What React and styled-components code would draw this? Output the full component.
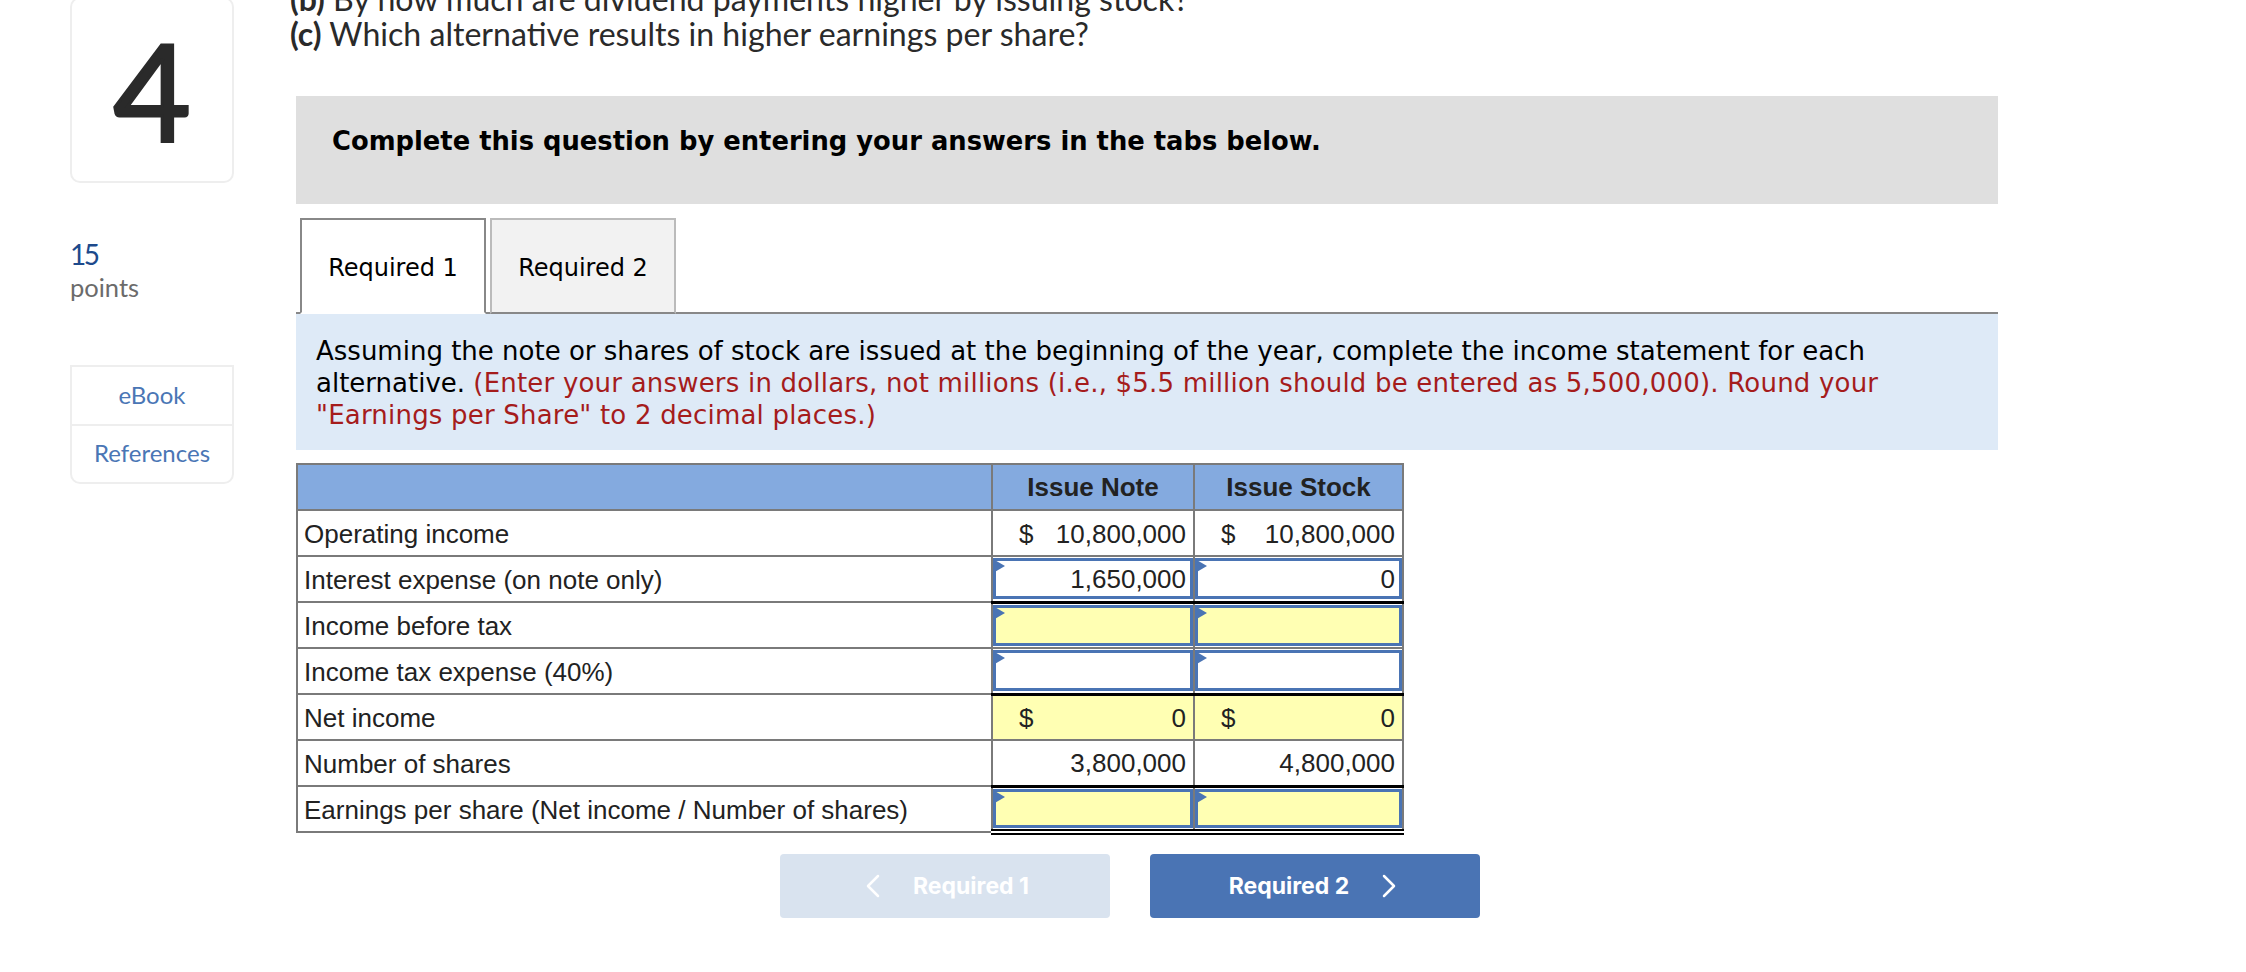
import React from "react";
import styled, { createGlobalStyle } from "styled-components";
import { ChevronLeft, ChevronRight } from "lucide-react";

const GlobalStyle = createGlobalStyle`
  html, body {
    margin: 0;
    padding: 0;
    background: #fff;
    overflow: hidden;
  }
`;

const rows = [
  { label: "Operating income", note: "10,800,000", stock: "10,800,000", dollar: true },
  { label: "Interest expense (on note only)", note: "1,650,000", stock: "0", input: true },
  { label: "Income before tax", input: true, yellow: true, rule: true },
  { label: "Income tax expense (40%)", input: true },
  { label: "Net income", note: "0", stock: "0", dollar: true, yellow: true, rule: true },
  { label: "Number of shares", note: "3,800,000", stock: "4,800,000" },
  { label: "Earnings per share (Net income / Number of shares)", input: true, yellow: true, rule: true, total: true },
];

const ValueCell = ({ value, row }) => (
  <Cell $yellow={row.yellow && !row.input} $rule={row.rule} $total={row.total}>
    {row.input ? (
      <Field $yellow={row.yellow} $total={row.total}>{value}</Field>
    ) : (
      <Amount>
        {row.dollar && <Dollar>$</Dollar>}
        <span>{value}</span>
      </Amount>
    )}
  </Cell>
);

const App = () => {
  return (
    <Page>
      <GlobalStyle />
      <Sidebar>
        <NumberCard>4</NumberCard>
        <Points>
          <PointsValue>15</PointsValue>
          <PointsLabel>points</PointsLabel>
        </Points>
        <LinkBox>
          <SideLink>eBook</SideLink>
          <SideLink>References</SideLink>
        </LinkBox>
      </Sidebar>
      <Main>
        <Question>
          <QuestionLine><b>(b)</b> By how much are dividend payments higher by issuing stock?</QuestionLine>
          <QuestionLine><b>(c)</b> Which alternative results in higher earnings per share?</QuestionLine>
        </Question>
        <Content>
          <Banner>Complete this question by entering your answers in the tabs below.</Banner>
          <Tabs>
            <Tab $active>Required 1</Tab>
            <Tab>Required 2</Tab>
          </Tabs>
          <Instructions>
            Assuming the note or shares of stock are issued at the beginning of the year, complete the income statement for each
            <br />
            alternative. <Red>(Enter your answers in dollars, not millions (i.e., $5.5 million should be entered as 5,500,000). Round your
            <br />
            "Earnings per Share" to 2 decimal places.)</Red>
          </Instructions>
          <Sheet>
            <colgroup>
              <col style={{ width: 695 }} />
              <col style={{ width: 202 }} />
              <col style={{ width: 209 }} />
            </colgroup>
            <thead>
              <tr>
                <HeadCell />
                <HeadCell>Issue Note</HeadCell>
                <HeadCell>Issue Stock</HeadCell>
              </tr>
            </thead>
            <tbody>
              {rows.map((row) => (
                <tr key={row.label}>
                  <LabelCell>{row.label}</LabelCell>
                  <ValueCell value={row.note} row={row} />
                  <ValueCell value={row.stock} row={row} />
                </tr>
              ))}
            </tbody>
          </Sheet>
          <Pager>
            <PagerButton $disabled>
              <ChevronLeft size={40} strokeWidth={1.5} />
              <span>Required 1</span>
            </PagerButton>
            <PagerButton>
              <span>Required 2</span>
              <ChevronRight size={40} strokeWidth={1.5} />
            </PagerButton>
          </Pager>
        </Content>
      </Main>
    </Page>
  );
};

export default App;

const Page = styled.div`
  display: flex;
  gap: 55px;
  width: 2246px;
  height: 975px;
  margin-top: -3px;
  padding-left: 70px;
  box-sizing: border-box;
  font-family: Lato, "Liberation Sans", sans-serif;
  color: #222;
`;

const Sidebar = styled.aside`
  width: 164px;
  flex: none;
  display: flex;
  flex-direction: column;
`;

const NumberCard = styled.div`
  height: 186px;
  box-sizing: border-box;
  border: 2px solid #eee;
  border-radius: 10px;
  display: flex;
  align-items: center;
  justify-content: center;
  font-size: 134px;
  line-height: 1;
  color: #2a2a2a;
  -webkit-text-stroke: 3px #2a2a2a;
`;

const Points = styled.div`
  margin-top: 54px;
  display: flex;
  flex-direction: column;
`;

const PointsValue = styled.div`
  font-size: 28px;
  line-height: 34px;
  letter-spacing: -2.5px;
  color: #1d4a8c;
`;

const PointsLabel = styled.div`
  font-size: 25.5px;
  line-height: 33px;
  color: #6b6b6b;
`;

const LinkBox = styled.div`
  margin-top: 61px;
  border: 2px solid #eee;
  border-radius: 0 0 10px 10px;
  height: 119px;
  box-sizing: border-box;
  display: flex;
  flex-direction: column;
`;

const SideLink = styled.div`
  flex: 1;
  display: flex;
  align-items: center;
  justify-content: center;
  padding-bottom: 2px;
  font-size: 24px;
  color: #4a76b5;
  & + & {
    border-top: 2px solid #eee;
  }
`;

const Main = styled.main`
  width: 1709px;
  flex: none;
  margin-top: -16px;
`;

const Question = styled.div`
  padding-left: 1px;
  font-size: 32.1px;
  line-height: 35px;
  color: #2a2a2a;
  margin-bottom: 45px;
`;

const QuestionLine = styled.div`
  white-space: nowrap;
`;

const Content = styled.div`
  padding-left: 7px;
`;

const Banner = styled.div`
  height: 108px;
  background: #dfdfdf;
  padding-left: 36px;
  display: flex;
  align-items: center;
  padding-bottom: 18px;
  box-sizing: border-box;
  font-family: "DejaVu Sans", sans-serif;
  font-weight: 700;
  font-size: 25.8px;
  color: #000;
`;

const Tabs = styled.div`
  display: flex;
  gap: 4px;
  margin-top: 14px;
  padding-left: 4px;
  border-bottom: 2px solid #888;
`;

const Tab = styled.div`
  width: 186px;
  height: 96px;
  margin-bottom: -2px;
  padding-top: 3px;
  box-sizing: border-box;
  display: flex;
  align-items: center;
  justify-content: center;
  font-family: "DejaVu Sans", sans-serif;
  font-size: 24px;
  color: #000;
  background: ${(p) => (p.$active ? "#fff" : "#f2f2f2")};
  border: 2px solid ${(p) => (p.$active ? "#888" : "#bbb")};
  border-bottom: ${(p) => (p.$active ? "2px solid #fff" : "2px solid #888")};
`;

const Instructions = styled.div`
  height: 136px;
  box-sizing: border-box;
  background: #deeaf7;
  padding: 21px 0 0 20px;
  font-family: "DejaVu Sans", sans-serif;
  font-size: 26px;
  line-height: 32px;
  color: #000;
  white-space: nowrap;
`;

const Red = styled.span`
  color: #a51c1c;
  letter-spacing: 0.2px;
`;

const Sheet = styled.table`
  margin-top: 13px;
  width: 1106px;
  table-layout: fixed;
  border-collapse: collapse;
  font-family: "Liberation Sans", sans-serif;
  font-size: 26px;
  color: #222;

  tr {
    height: 46px;
  }
`;

const HeadCell = styled.th`
  background: #84aadf;
  border: 2px solid #7a7a7a;
  padding: 0;
  font-weight: 700;
  text-align: center;
`;

const LabelCell = styled.td`
  border: 2px solid #7a7a7a;
  padding: 2px 6px 0;
  white-space: nowrap;
`;

const Cell = styled.td`
  border: 2px solid #7a7a7a;
  border-top: ${(p) => (p.$rule ? "3px solid #000" : "2px solid #7a7a7a")};
  border-bottom: ${(p) => (p.$total ? "6px double #000" : "2px solid #7a7a7a")};
  background: ${(p) => (p.$yellow ? "#ffffb3" : "#fff")};
  padding: 0;
`;

const Amount = styled.div`
  display: flex;
  justify-content: flex-end;
  padding: 2px 7px 0 26px;
`;

const Dollar = styled.span`
  margin-right: auto;
`;

const Field = styled.div`
  position: relative;
  height: ${(p) => (p.$total ? "39px" : "41px")};
  margin: 1px 0;
  box-sizing: border-box;
  border: 3px solid #4a74b4;
  background: ${(p) => (p.$yellow ? "#ffffb3" : "#fff")};
  padding-right: 4px;
  line-height: 36px;
  text-align: right;

  &::before {
    content: "";
    position: absolute;
    left: -3px;
    top: -2px;
    border-left: 12px solid #4a74b4;
    border-top: 7px solid transparent;
    border-bottom: 7px solid transparent;
  }
`;

const Pager = styled.div`
  display: flex;
  gap: 40px;
  margin: 19px 0 0 484px;
`;

const PagerButton = styled.div`
  width: 330px;
  height: 64px;
  box-sizing: border-box;
  padding: ${(p) => (p.$disabled ? "0 8px 0 0" : "0 0 0 8px")};
  border-radius: 4px;
  display: flex;
  align-items: center;
  justify-content: center;
  gap: 20px;
  font-family: Inter, sans-serif;
  font-weight: 700;
  font-size: 23px;
  color: #fff;
  background: ${(p) => (p.$disabled ? "#d9e3ef" : "#4a74b4")};
`;
